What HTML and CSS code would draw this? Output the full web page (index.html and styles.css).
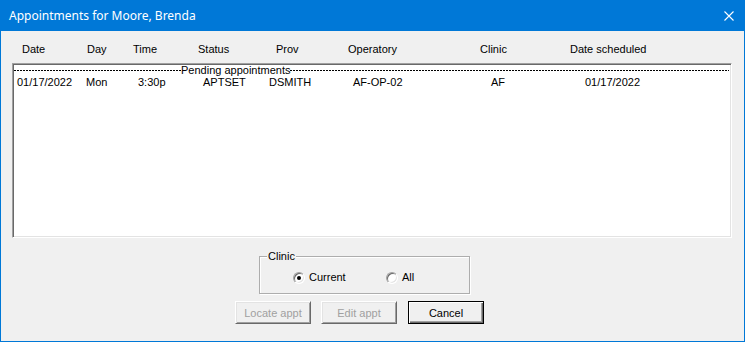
FILE: index.html
```html
<!DOCTYPE html>
<html lang="en">
<head>
  <meta charset="UTF-8">
  <title>Appointments for Moore, Brenda</title>
  <link rel="stylesheet" href="styles.css">
</head>
<body>
  <div class="window">
    <div class="titlebar">
      <span class="title">Appointments for Moore, Brenda</span>
      <svg class="close" width="10" height="10" viewBox="0 0 10 10">
        <path d="M0.5 0.5 L9.5 9.5 M9.5 0.5 L0.5 9.5" stroke="#fff" stroke-width="1.1" fill="none"/>
      </svg>
    </div>

    <div class="content">
      <div class="cols head">
        <span>Date</span>
        <span>Day</span>
        <span>Time</span>
        <span>Status</span>
        <span>Prov</span>
        <span>Operatory</span>
        <span>Clinic</span>
        <span>Date scheduled</span>
      </div>

      <div class="listbox">
        <div class="divider">
          <span class="dash left"></span>
          <span class="divider-text">Pending appointments</span>
          <span class="dash right"></span>
        </div>
        <div class="cols row">
          <span>01/17/2022</span>
          <span>Mon</span>
          <span>3:30p</span>
          <span>APTSET</span>
          <span>DSMITH</span>
          <span>AF-OP-02</span>
          <span>AF</span>
          <span>01/17/2022</span>
        </div>
      </div>

      <div class="group">
        <span class="legend">Clinic</span>
        <div class="radios">
          <label class="option"><span class="radio checked"></span>Current</label>
          <label class="option"><span class="radio"></span>All</label>
        </div>
      </div>

      <div class="buttons">
        <button class="btn" disabled>Locate appt</button>
        <button class="btn" disabled>Edit appt</button>
        <button class="btn default">Cancel</button>
      </div>
    </div>
  </div>
</body>
</html>
```

FILE: styles.css
```css
body {
  margin: 0;
  font-family: "Liberation Sans", Arial, sans-serif;
  font-size: 11px;
  color: #000;
  background: #f0f0f0;
}

.window {
  width: 745px;
  height: 342px;
  box-sizing: border-box;
  border: 1px solid #0078d7;
  border-top: 0;
  background: #f0f0f0;
  display: flex;
  flex-direction: column;
}

.titlebar {
  height: 31px;
  flex: none;
  background: #0078d7;
  color: #fff;
  display: flex;
  align-items: center;
  padding: 0 10px 0 8px;
}

.title {
  flex: 1;
  font-family: "Noto Sans", "Open Sans", sans-serif;
  font-size: 12px;
  line-height: 16px;
  padding-top: 1px;
}

.close {
  display: block;
}

.content {
  display: flex;
  flex-direction: column;
}

/* column grids */
.cols {
  display: grid;
  line-height: 13px;
  white-space: nowrap;
}

.head {
  grid-template-columns: 65px 46px 65px 78px 72px 132px 90px 1fr;
  padding: 12px 0 7px 21px;
}

.row {
  grid-template-columns: 69px 52px 65px 66px 84px 138px 94px 1fr;
  padding-left: 3px;
}

.listbox {
  margin-left: 11px;
  width: 720px;
  height: 175px;
  box-sizing: border-box;
  background: #fff;
  border: 1px solid;
  border-color: #a0a0a0 #fff #fff #a0a0a0;
  box-shadow: inset 1px 1px 0 #696969, inset -1px -1px 0 #e3e3e3;
  padding: 1px 1px 0 1px;
}

.divider {
  display: flex;
  align-items: flex-start;
  height: 11px;
  line-height: 11px;
}

.dash {
  height: 1px;
  margin-top: 5px;
  background: repeating-linear-gradient(to right, #000 0 2px, transparent 2px 3px);
}

.dash.left {
  width: 167px;
}

.dash.right {
  flex: 1;
  margin-right: 1px;
}

/* clinic group box */
.group {
  position: relative;
  margin: 18px 0 0 258px;
  width: 211px;
  height: 38px;
  box-sizing: border-box;
  border: 1px solid #adadad;
  box-shadow: 1px 1px 0 #fff, inset 1px 1px 0 #fff;
}

.legend {
  position: absolute;
  top: -7px;
  left: 7px;
  padding: 0 1px;
  background: #f0f0f0;
  line-height: 13px;
}

.radios {
  display: flex;
  padding: 14px 0 0 33px;
}

.option {
  flex: none;
  display: flex;
  align-items: center;
  width: 93px;
  line-height: 13px;
}

.radio {
  position: relative;
  flex: none;
  width: 12px;
  height: 12px;
  box-sizing: border-box;
  border-radius: 50%;
  border: 1px solid;
  border-color: #a0a0a0 #fff #fff #a0a0a0;
  background: #fff;
  box-shadow: inset 1px 1px 0 #696969, inset -1px -1px 0 #e3e3e3;
  margin-right: 4px;
}

.radio.checked::after {
  content: "";
  position: absolute;
  left: 3px;
  top: 3px;
  width: 4px;
  height: 4px;
  border-radius: 50%;
  background: #000;
}

/* buttons */
.buttons {
  display: flex;
  gap: 10px;
  margin: 7px 0 0 234px;
}

.btn {
  width: 76px;
  height: 23px;
  box-sizing: border-box;
  font-family: "Liberation Sans", Arial, sans-serif;
  font-size: 11px;
  color: #000;
  background: #f0f0f0;
  border: 1px solid;
  border-color: #fff #696969 #696969 #fff;
  box-shadow: inset 1px 1px 0 #e3e3e3, inset -1px -1px 0 #a0a0a0;
  padding: 0;
}

.btn:disabled {
  color: #a0a0a0;
}

.btn.default {
  margin-left: 1px;
  border: 1px solid #000;
  box-shadow: inset 1px 1px 0 #fff, inset -1px -1px 0 #696969, inset -2px -2px 0 #a0a0a0;
}
```
